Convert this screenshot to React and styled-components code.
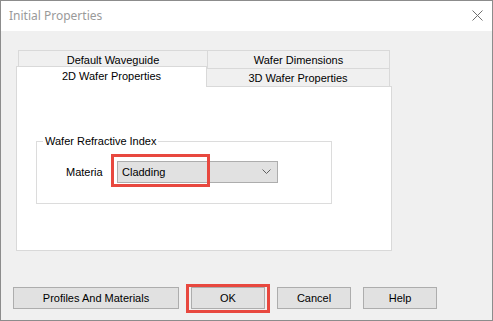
import React from "react";
import styled, { createGlobalStyle } from "styled-components";

const GlobalStyle = createGlobalStyle`
  html, body {
    margin: 0;
    padding: 0;
    background: #f0f0f0;
  }
  * {
    box-sizing: border-box;
  }
`;

const Window = styled.div`
  width: 493px;
  height: 321px;
  border: 1px solid #8c8c8c;
  background: #f0f0f0;
  display: flex;
  flex-direction: column;
  font-family: "Liberation Sans", Arial, sans-serif;
  font-size: 11px;
  color: #000;
`;

const TitleBar = styled.div`
  height: 30px;
  background: #fff;
  display: flex;
  align-items: center;
  justify-content: space-between;
  padding: 0 9px 0 8px;
`;

const Title = styled.span`
  font-family: "Noto Sans", sans-serif;
  font-size: 12px;
  color: #9a9a9a;
  margin-top: -1px;
`;

const CloseBtn = styled.svg`
  width: 11px;
  height: 11px;
  margin-top: -1px;
`;

const Body = styled.div`
  flex: 1;
  padding: 19px 0 0 15px;
  display: flex;
  flex-direction: column;
`;

const TabBox = styled.div`
  width: 376px;
  display: flex;
  flex-direction: column;
`;

const TabRow = styled.div`
  display: flex;
  height: ${(p) => (p.$front ? "20px" : "18px")};
  margin-top: ${(p) => (p.$front ? "-2px" : "0")};
  padding-left: ${(p) => (p.$front ? "0" : "2px")};
  align-items: flex-start;
  position: relative;
  z-index: ${(p) => (p.$front ? 1 : 0)};
`;

const Tab = styled.div`
  width: ${(p) => p.$w}px;
  height: ${(p) => (p.$active ? "21px" : "18px")};
  margin-top: ${(p) => (p.$active || !p.$front ? "0" : "2px")};
  margin-left: ${(p) => (p.$shift ? "-1px" : "0")};
  background: ${(p) => (p.$active ? "#fff" : "#f0f0f0")};
  border: 1px solid #d9d9d9;
  border-bottom: none;
  display: flex;
  align-items: center;
  justify-content: center;
  padding-bottom: ${(p) => (p.$active ? "2px" : "0")};
  position: relative;
  z-index: ${(p) => (p.$active ? 2 : 0)};
`;

const Panel = styled.div`
  height: 165px;
  background: #fff;
  border: 1px solid #d9d9d9;
  padding: 48px 0 0 19px;
`;

const Group = styled.fieldset`
  margin: 0;
  padding: 0;
  width: 296px;
  height: 69px;
  border: 1px solid #dcdcdc;
`;

const Legend = styled.legend`
  margin-left: 6px;
  padding: 0 2px;
  line-height: 13px;
  font-size: 11px;
`;

const Field = styled.div`
  display: flex;
  align-items: center;
  margin: 13px 0 0 29px;
`;

const Label = styled.span`
  width: 51px;
`;

const ComboWrap = styled.div`
  position: relative;
`;

const Combo = styled.div`
  width: 161px;
  height: 22px;
  background: #e1e1e1;
  border: 1px solid #adadad;
  display: flex;
  align-items: center;
  justify-content: space-between;
  padding: 0 6px 0 4px;
`;

const Highlight = styled.div`
  position: absolute;
  left: ${(p) => p.$l}px;
  top: ${(p) => p.$t}px;
  width: ${(p) => p.$w}px;
  height: ${(p) => p.$h}px;
  border: 3px solid #e8483f;
  pointer-events: none;
`;

const ButtonRow = styled.div`
  display: flex;
  gap: 12px;
  margin: 36px 0 0 -3px;
`;

const ButtonWrap = styled.div`
  position: relative;
`;

const Button = styled.div`
  width: ${(p) => p.$w}px;
  height: 22px;
  background: #e1e1e1;
  border: 1px solid #adadad;
  display: flex;
  align-items: center;
  justify-content: center;
`;

const App = () => {
  return (
    <>
      <GlobalStyle />
      <Window>
        <TitleBar>
          <Title>Initial Properties</Title>
          <CloseBtn viewBox="0 0 11 11">
            <path d="M0.5 0.5 L10.5 10.5 M10.5 0.5 L0.5 10.5" stroke="#6f6f6f" strokeWidth="1" fill="none" />
          </CloseBtn>
        </TitleBar>
        <Body>
          <TabBox>
            <TabRow>
              <Tab $w={190}>Default Waveguide</Tab>
              <Tab $w={183} $shift>Wafer Dimensions</Tab>
            </TabRow>
            <TabRow $front>
              <Tab $w={191} $active $front>2D Wafer Properties</Tab>
              <Tab $w={184} $front $shift>3D Wafer Properties</Tab>
            </TabRow>
            <Panel>
              <Group>
                <Legend>Wafer Refractive Index</Legend>
                <Field>
                  <Label>Materia</Label>
                  <ComboWrap>
                    <Combo>
                      <span>Cladding</span>
                      <svg width="9" height="6" viewBox="0 0 9 6">
                        <path d="M0.5 0.5 L4.5 4.5 L8.5 0.5" stroke="#606060" strokeWidth="1" fill="none" />
                      </svg>
                    </Combo>
                    <Highlight $l={-6} $t={-7} $w={99} $h={33} />
                  </ComboWrap>
                </Field>
              </Group>
            </Panel>
          </TabBox>
          <ButtonRow>
            <Button $w={166}>Profiles And Materials</Button>
            <ButtonWrap>
              <Button $w={74}>OK</Button>
              <Highlight $l={-5} $t={-3} $w={84} $h={29} />
            </ButtonWrap>
            <Button $w={74}>Cancel</Button>
            <Button $w={74}>Help</Button>
          </ButtonRow>
        </Body>
      </Window>
    </>
  );
};

export default App;
